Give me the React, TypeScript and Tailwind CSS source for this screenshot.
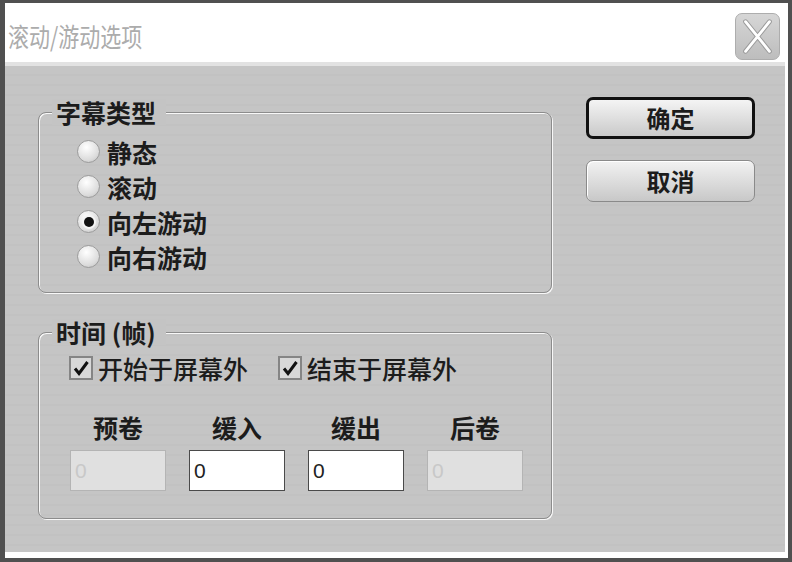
import React from "react";

const FONT = "font-['Noto_Sans_CJK_SC','Noto_Sans',sans-serif]";

function Radio({ label, checked = false }: { label: string; checked?: boolean }) {
  return (
    <div className="h-[35px] flex items-center gap-[7px]">
      <span className="w-[23px] h-[23px] rounded-full border border-[#9c9c9c] bg-[radial-gradient(circle_at_40%_30%,#ffffff,#dcdcdc_65%,#bcbcbc)] flex items-center justify-center">
        {checked && <span className="w-[10px] h-[10px] rounded-full bg-[#111] shadow-[0_0_0_2px_#f4f4f4]" />}
      </span>
      <span className="text-[25px] leading-[26px] font-bold text-[#1c1c1c]">{label}</span>
    </div>
  );
}

function Check({ label }: { label: string }) {
  return (
    <div className="flex items-center gap-[5px]">
      <span className="w-[24px] h-[24px] border-2 border-[#858585] bg-[#d8d8d8] flex items-center justify-center">
        <svg width="18" height="18" viewBox="0 0 18 18">
          <path d="M3 9.5 L7 14.5 L15.5 3" fill="none" stroke="#111" strokeWidth="3" />
        </svg>
      </span>
      <span className="text-[25px] leading-[26px] font-medium text-[#1c1c1c]">{label}</span>
    </div>
  );
}

function Group({ title, className, children }: { title: string; className: string; children: React.ReactNode }) {
  return (
    <div className={`relative rounded-[8px] border border-[#8c8c8c] shadow-[1px_1px_0_#f8f8f8,inset_1px_1px_0_#f8f8f8] ${className}`}>
      <span className="absolute -top-[14px] left-[13px] pl-[4px] pr-[10px] bg-[#c4c4c4] text-[25px] leading-[26px] font-bold text-[#1c1c1c]">
        {title}
      </span>
      {children}
    </div>
  );
}

function Field({ enabled }: { enabled: boolean }) {
  return enabled ? (
    <input
      readOnly
      value="0"
      className="w-[96px] h-[41px] border border-[#4a4a4a] bg-white pl-[4px] text-[21px] text-[#222] font-['Liberation_Sans',sans-serif] outline-none"
    />
  ) : (
    <input
      readOnly
      disabled
      value="0"
      className="w-[96px] h-[41px] border border-[#b4b4b4] bg-[#e0e0e0] pl-[4px] text-[21px] text-[#c8c8c8] font-['Liberation_Sans',sans-serif] outline-none"
    />
  );
}

export default function App() {
  const labels = ["预卷", "缓入", "缓出", "后卷"];

  return (
    <div className={`w-[792px] h-[562px] bg-[#505050] pt-[3px] pl-[5px] pr-[4px] pb-[4px] flex ${FONT}`}>
      <div className="flex-1 flex flex-col bg-white pr-[3px] pb-[6px]">
        {/* title bar */}
        <div className="h-[59px] flex items-center justify-between pl-[3px] pr-[5px] pt-[7px]">
          <span className="text-[21px] leading-[26px] text-[#acacac] scale-y-[1.25] origin-center">滚动/游动选项</span>
          <div className="w-[45px] h-[47px] rounded-[7px] border border-[#adadad] bg-[linear-gradient(180deg,#d6d6d6,#bdbdbd)] flex items-center justify-center">
            <svg width="45" height="47" viewBox="0 0 45 47">
              <path d="M10 8 L35 39 M35 8 L10 39" stroke="#9a9a9a" strokeWidth="5" strokeLinecap="round" />
              <path d="M10 8 L35 39 M35 8 L10 39" stroke="#ffffff" strokeWidth="3" strokeLinecap="round" />
            </svg>
          </div>
        </div>
        <div className="h-[4px] bg-[#e2e2e2]" />

        {/* body */}
        <div className="flex-1 flex gap-[34px] pl-[33px] pt-[31px] bg-[repeating-linear-gradient(180deg,#c5c5c5_0px,#c5c5c5_8px,#bfbfbf_9px,#c5c5c5_10px)]">
          <div className="w-[514px] flex flex-col">
            <Group title="字幕类型" className="mt-[15px] h-[181px] pt-[21px] pl-[38px]">
              <Radio label="静态" />
              <Radio label="滚动" />
              <Radio label="向左游动" checked />
              <Radio label="向右游动" />
            </Group>

            <Group title="时间 (帧)" className="mt-[39px] h-[187px] pt-[22px] pl-[30px]">
              <div className="flex gap-[30px]">
                <Check label="开始于屏幕外" />
                <Check label="结束于屏幕外" />
              </div>
              <div className="mt-[33px] pl-[1px] grid grid-cols-[96px_96px_96px_96px] gap-x-[23px]">
                {labels.map((l) => (
                  <span key={l} className="text-center text-[25px] leading-[26px] font-bold text-[#1c1c1c]">
                    {l}
                  </span>
                ))}
              </div>
              <div className="mt-[10px] pl-[1px] grid grid-cols-[96px_96px_96px_96px] gap-x-[23px]">
                <Field enabled={false} />
                <Field enabled />
                <Field enabled />
                <Field enabled={false} />
              </div>
            </Group>
          </div>

          <div className="w-[169px] flex flex-col">
            <button className="h-[42px] rounded-[7px] border-[3px] border-[#111] bg-[linear-gradient(180deg,#f4f4f4,#cacaca)] text-[24px] font-bold text-[#1c1c1c]">
              确定
            </button>
            <button className="mt-[21px] h-[42px] rounded-[7px] border border-[#8a8a8a] shadow-[inset_1px_1px_0_#fff] bg-[linear-gradient(180deg,#f2f2f2,#c8c8c8)] text-[24px] font-bold text-[#1c1c1c]">
              取消
            </button>
          </div>
        </div>
      </div>
    </div>
  );
}
